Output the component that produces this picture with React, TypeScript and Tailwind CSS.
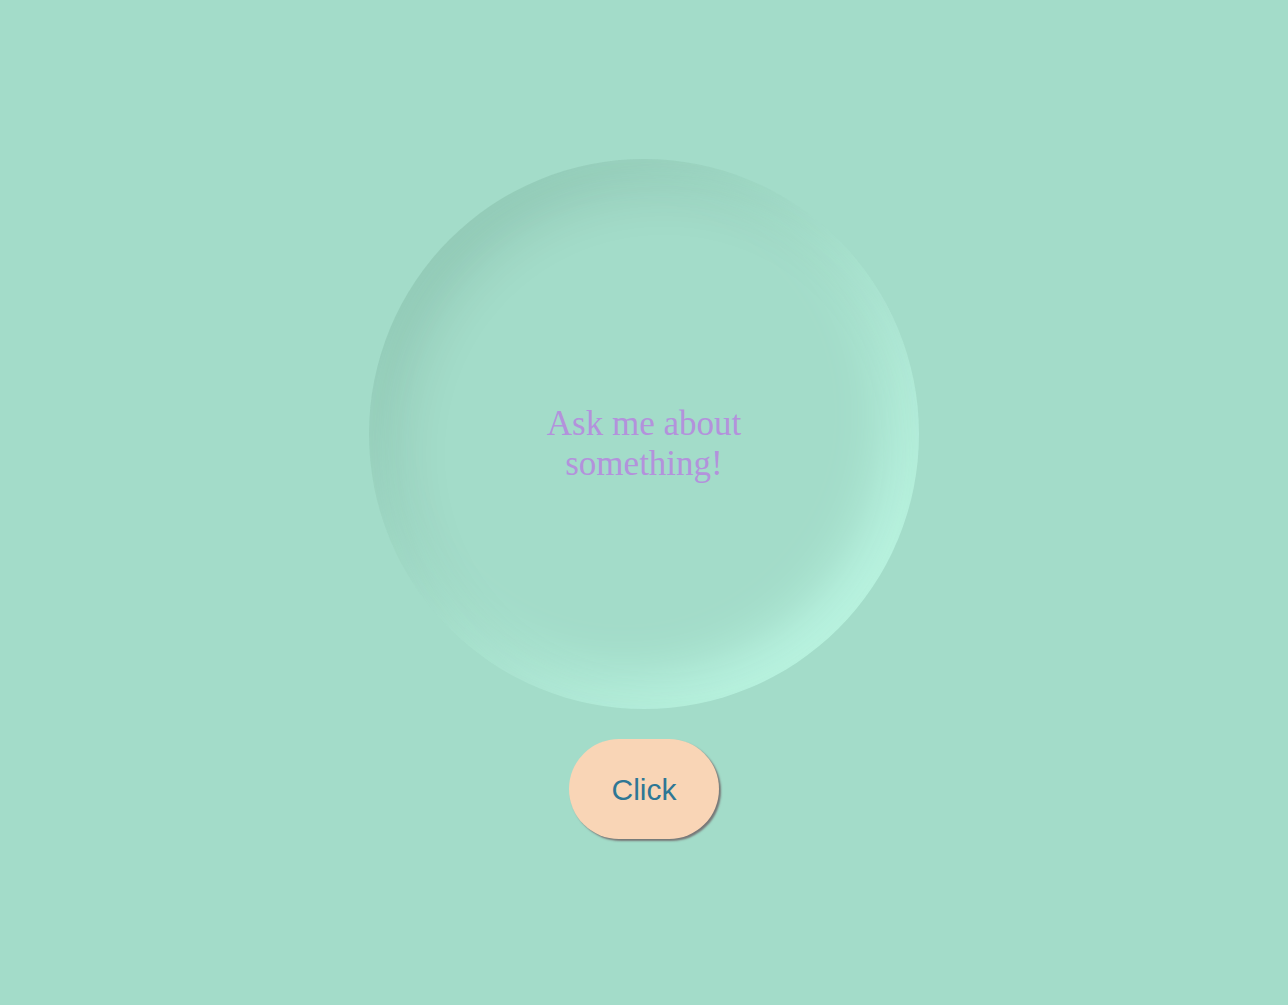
import React from 'react';

export default function App() {
  return (
    <div className="min-h-screen w-full bg-[#a3dcc9] flex flex-col items-center pt-[159px]">
      {/* answer bubble */}
      <div className="w-[550px] h-[550px] rounded-full bg-[#a3dcc9] flex items-center justify-center shadow-[inset_20px_20px_60px_rgba(0,50,30,0.14),inset_-20px_-20px_60px_#c0fbe8]">
        <p
          className="mt-[20px] w-[215px] text-center text-[35px] leading-[40px] text-[#b392dc]"
          style={{ fontFamily: '"Liberation Serif", "Times New Roman", serif' }}
        >
          Ask me about something!
        </p>
      </div>
      <button
        className="mt-[30px] w-[150px] h-[100px] rounded-full bg-[#f9d5b6] text-[30px] text-[#2e7795] shadow-[2px_2px_2px_#777]"
        style={{ fontFamily: '"Liberation Sans", Arial, sans-serif' }}
      >
        Click
      </button>
    </div>
  );
}
